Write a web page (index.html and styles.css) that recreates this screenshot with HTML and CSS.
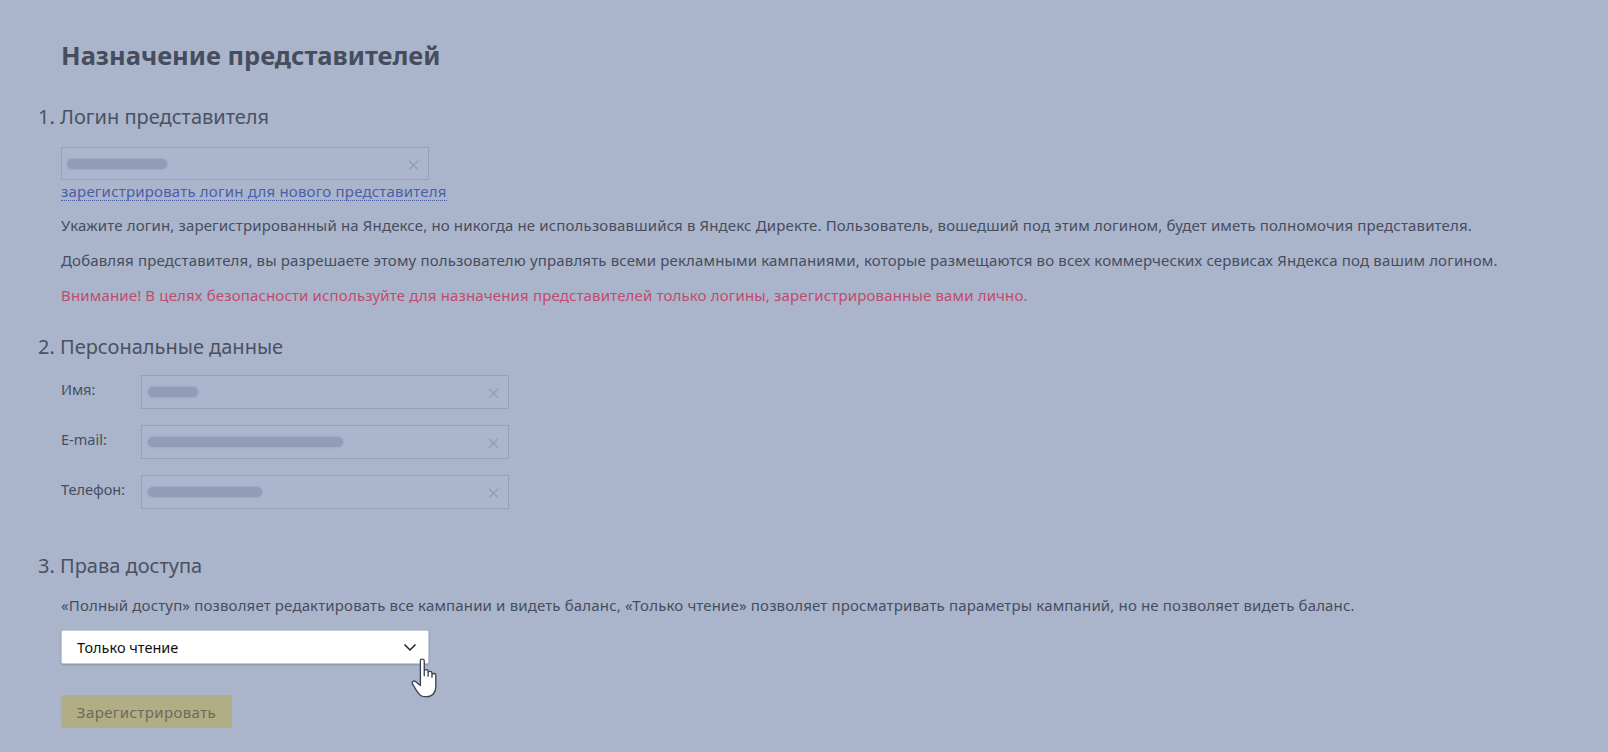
FILE: index.html
```html
<!DOCTYPE html>
<html lang="ru">
<head>
    <meta charset="UTF-8">
    <title>Назначение представителей</title>
    <link rel="stylesheet" href="styles.css">
</head>
<body>

    <div class="page">
        <h1 class="title">Назначение представителей</h1>

        <!-- 1. Login -->
        <div class="section section-login">
            <div class="section-title">1. Логин представителя</div>
            <div class="section-body">
                <div class="field field-login">
                    <span class="blur" style="width: 100px"></span>
                    <span class="clear">&times;</span>
                </div>
                <a class="register-link" href="#">зарегистрировать логин для нового представителя</a>
                <p class="hint">Укажите логин, зарегистрированный на Яндексе, но никогда не использовавшийся в Яндекс Директе. Пользователь, вошедший под этим логином, будет иметь полномочия представителя.</p>
                <p class="hint">Добавляя представителя, вы разрешаете этому пользователю управлять всеми рекламными кампаниями, которые размещаются во всех коммерческих сервисах Яндекса под вашим логином.</p>
                <p class="hint warning">Внимание! В целях безопасности используйте для назначения представителей только логины, зарегистрированные вами лично.</p>
            </div>
        </div>

        <!-- 2. Personal data -->
        <div class="section section-personal">
            <div class="section-title">2. Персональные данные</div>
            <div class="section-body">
                <div class="row">
                    <label class="row-label">Имя:</label>
                    <div class="field">
                        <span class="blur" style="width: 50px"></span>
                        <span class="clear">&times;</span>
                    </div>
                </div>
                <div class="row">
                    <label class="row-label">E-mail:</label>
                    <div class="field">
                        <span class="blur" style="width: 195px"></span>
                        <span class="clear">&times;</span>
                    </div>
                </div>
                <div class="row">
                    <label class="row-label">Телефон:</label>
                    <div class="field">
                        <span class="blur" style="width: 114px"></span>
                        <span class="clear">&times;</span>
                    </div>
                </div>
            </div>
        </div>

        <!-- 3. Access -->
        <div class="section section-access">
            <div class="section-title">3. Права доступа</div>
            <div class="section-body">
                <p class="hint access-hint">«Полный доступ» позволяет редактировать все кампании и видеть баланс, «Только чтение» позволяет просматривать параметры кампаний, но не позволяет видеть баланс.</p>
                <div class="select">
                    <span class="select-value">Только чтение</span>
                    <svg class="chevron" width="14" height="9" viewBox="0 0 14 9">
                        <path d="M1.5 1.5 L7 7 L12.5 1.5" fill="none" stroke="#222" stroke-width="1.5"/>
                    </svg>
                    <svg class="cursor" width="34" height="44" viewBox="0 0 30 40">
                        <path d="M9 3.5 C9 1.5 12.5 1.5 12.5 3.5 L12.5 17 L12.5 13 C12.5 11 16 11 16 13 L16 17.5 L16 14.5 C16 12.5 19.5 12.5 19.5 14.5 L19.5 18.5 L19.5 16.5 C19.5 14.5 23 14.5 23 16.5 L23 27 C23 32 20 36 15 36 L13 36 C9 36 7.5 33.5 5.5 30.5 L1.8 24.5 C0.8 22.8 2.8 21 4.5 22.3 L9 26 Z"
                              fill="#fff" stroke="#3b4150" stroke-width="1.2" stroke-linejoin="round"/>
                    </svg>
                </div>
                <button class="submit" type="button">Зарегистрировать</button>
            </div>
        </div>
    </div>

</body>
</html>
```

FILE: styles.css
```css
/* Base styling */
body {
    margin: 0;
    background-color: #aab5cc;
    color: #464d5d;
    font-family: 'Noto Sans', 'Open Sans', sans-serif;
    font-size: 15px;
    letter-spacing: 0.15px;
    height: 752px;
    overflow: hidden;
}

.page {
    padding: 40px 0 0 38px;
}

.title {
    margin: 0 0 0 23px;
    font-size: 25.5px;
    line-height: 30px;
    font-weight: 700;
    letter-spacing: 0;
    color: #464d5d;
}

.section-title {
    font-size: 20px;
    line-height: 24px;
    letter-spacing: 0;
    color: #4a5162;
}

.section-body {
    padding-left: 23px;
}

.section-login {
    margin-top: 35px;
}

.section-login .section-title {
    margin-bottom: 18px;
}

.section-personal {
    margin-top: 30px;
}

.section-personal .section-title {
    margin-bottom: 16px;
}

.section-access {
    margin-top: 45px;
}

/* Inputs */
.field {
    width: 368px;
    height: 34px;
    box-sizing: border-box;
    border: 1px solid #96a1b9;
    background-color: #abb6ce;
    display: flex;
    align-items: center;
    justify-content: space-between;
    padding: 0 8px 0 6px;
}

.field-login {
    height: 33px;
    padding-left: 5px;
}

.blur {
    display: block;
    height: 10px;
    border-radius: 5px;
    background-color: #919db7;
    box-shadow: 0 0 3px #919db7;
}

.clear {
    color: #8f9ab1;
    font-size: 22px;
    line-height: 20px;
    font-weight: 300;
}

.register-link {
    display: inline-block;
    margin-top: 2px;
    font-size: 15px;
    line-height: 18px;
    letter-spacing: 0.2px;
    color: #4a5fa6;
    text-decoration: none;
    border-bottom: 1px dotted #4a5fa6;
}

.hint {
    margin: 14px 0 0;
    line-height: 20px;
}

.hint + .hint {
    margin-top: 15px;
}

.warning {
    color: #c24b6c;
}

/* Personal data rows */
.row {
    display: flex;
    margin-bottom: 16px;
}

.row-label {
    width: 80px;
    padding-top: 4px;
    line-height: 20px;
    font-size: 14.5px;
    letter-spacing: 0;
}

/* Access */
.access-hint {
    margin-top: 17px;
}

.select {
    position: relative;
    margin-top: 15px;
    width: 368px;
    height: 34px;
    box-sizing: border-box;
    background-color: #fff;
    border: 1px solid #c5cad4;
    border-radius: 2px;
    box-shadow: 0 1px 2px rgba(40, 50, 70, 0.25);
    display: flex;
    align-items: center;
    justify-content: space-between;
    padding: 0 11px 0 15px;
}

.select-value {
    color: #111;
    font-size: 14.5px;
    letter-spacing: 0;
}

.cursor {
    position: absolute;
    left: 348px;
    top: 26px;
}

.submit {
    display: block;
    margin-top: 31px;
    width: 171px;
    height: 33px;
    border: none;
    border-radius: 2px;
    background-color: #b1ae85;
    color: #6b6a5c;
    font-family: inherit;
    font-size: 15px;
    letter-spacing: 0.4px;
    padding: 0;
}
```
